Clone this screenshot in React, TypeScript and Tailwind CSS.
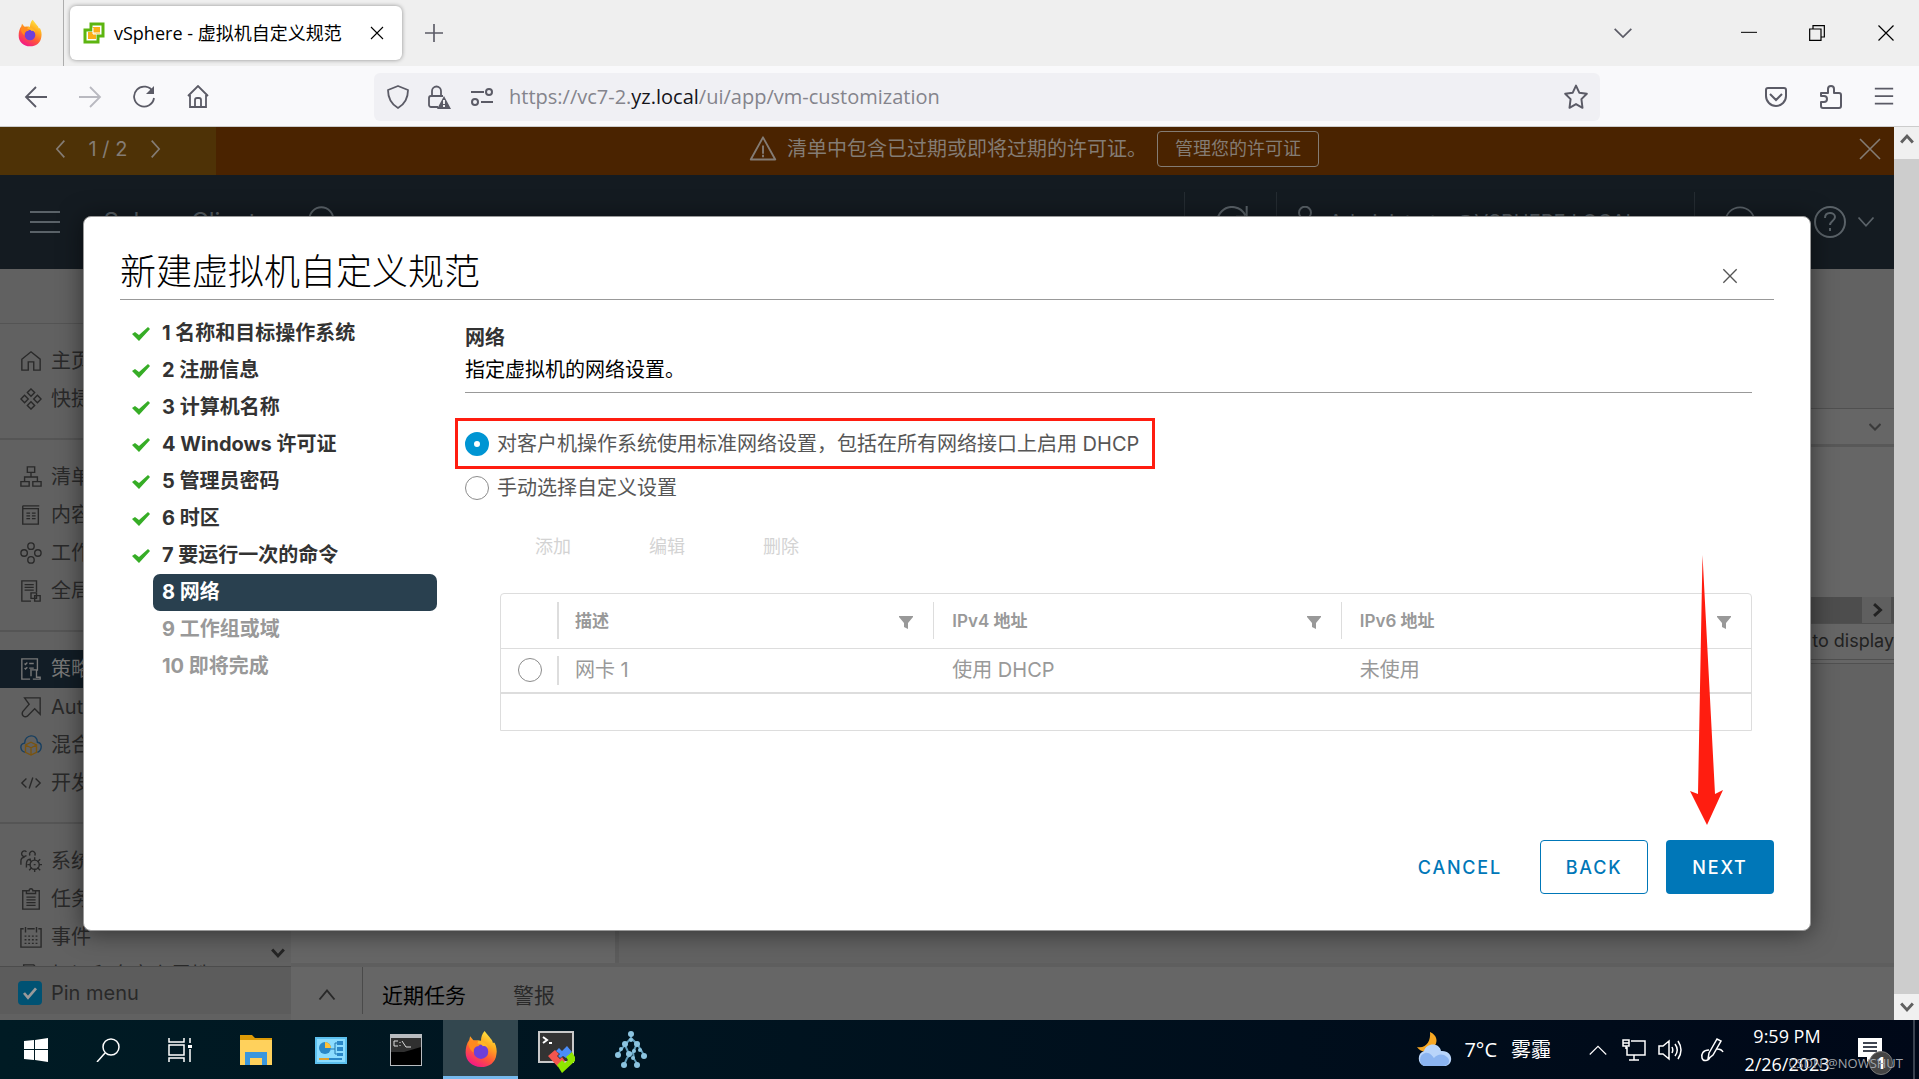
import { useState } from "react";
import type { ReactNode } from "react";
import clsx from "clsx";

const STEPS = [
  "1 名称和目标操作系统",
  "2 注册信息",
  "3 计算机名称",
  "4 Windows 许可证",
  "5 管理员密码",
  "6 时区",
  "7 要运行一次的命令",
  "8 网络",
  "9 工作组或域",
  "10 即将完成",
];
const CURRENT_STEP = 7;

function Icon({
  children,
  className,
  box = 24,
  stroke = 1.5,
}: {
  children: ReactNode;
  className?: string;
  box?: number;
  stroke?: number;
}) {
  return (
    <svg
      aria-hidden="true"
      viewBox={`0 0 ${box} ${box}`}
      fill="none"
      stroke="currentColor"
      strokeWidth={stroke}
      className={clsx("shrink-0", className)}
    >
      {children}
    </svg>
  );
}

function FirefoxLogo({ className }: { className: string }) {
  return (
    <svg aria-hidden="true" viewBox="0 0 36 42" className={className}>
      <defs>
        <linearGradient id="fx-body" x1="0.8" y1="0" x2="0.3" y2="1">
          <stop offset="0" stopColor="#fff04a" />
          <stop offset="0.35" stopColor="#ffab1f" />
          <stop offset="0.65" stopColor="#ff5a36" />
          <stop offset="1" stopColor="#f3148a" />
        </linearGradient>
      </defs>
      <path
        d="M22 1c2 3 5 6 7 9 1 1 2 3 2 4l2 0c2 4 3 9 2 13-1 9-8 14-17 14C8 41 1 34 1 25c0-5 1-10 4-14l1-4 4 5c3-1 6-1 8 0 0-4 1-8 4-11z"
        fill="url(#fx-body)"
      />
      <circle cx="18" cy="24" r="8" fill="#6d3fd9" />
      <path d="M4 14c4-4 10-3 14 1l-3 3c-4 0-6 3-5 7-3-2-6-6-6-11z" fill="#ff8a1e" />
      <path d="M15 12c5 0 10 3 11 8-2-2-4-3-6-2-1-2-3-3-6-3z" fill="#ffb728" />
    </svg>
  );
}

function TabStrip() {
  return (
    <div className="flex h-[66px] shrink-0 items-center bg-[#efefef] text-[#5b5b66]">
      <div className="flex h-full w-16 items-center justify-center border-r border-[#adadad]">
        <FirefoxLogo className="mr-1 h-7 w-6" />
      </div>
      <div className="ml-1.5 flex h-[54px] w-[332px] items-center rounded-md bg-white pl-[13px] pr-4 text-black shadow-[0_0_4px_rgba(0,0,0,0.4)]">
        <svg aria-hidden="true" viewBox="0 0 22 22" className="h-[22px] w-[22px] shrink-0">
          <path d="M8 2h12v12h-5v6H2V8h6z" fill="#fff" stroke="#5db510" strokeWidth="3" />
          <path d="M10 5h7v7h-4v5H5v-7h5z" fill="#fbae17" />
          <path d="M10 6v5h7M10 11v1h3" fill="none" stroke="#fff" strokeWidth="1" />
        </svg>
        <span className="ml-[9px] flex-1 whitespace-nowrap text-lg leading-6">vSphere - 虚拟机自定义规范</span>
        <button type="button" aria-label="Close tab">
          <Icon className="h-[18px] w-[18px]">
            <path d="M4 4l16 16M20 4L4 20" />
          </Icon>
        </button>
      </div>
      <button type="button" aria-label="New tab" className="ml-[23px]">
        <Icon className="h-[18px] w-[18px]" stroke={2.2}>
          <path d="M12 0v24M0 12h24" />
        </Icon>
      </button>
      <button type="button" aria-label="List all tabs" className="ml-auto">
        <Icon className="h-5 w-5" stroke={2}>
          <path d="M2 7l10 10L22 7" />
        </Icon>
      </button>
      <div className="ml-[108px] mr-6 flex items-center gap-[52px] text-black">
        <button type="button" aria-label="Minimize">
          <Icon className="h-4 w-4">
            <path d="M0 11h24" />
          </Icon>
        </button>
        <button type="button" aria-label="Restore">
          <Icon className="h-4 w-4" stroke={1.8}>
            <path d="M1 6h17v17H1zM6 6V1h17v17h-5" />
          </Icon>
        </button>
        <button type="button" aria-label="Close window">
          <Icon className="h-[18px] w-[18px]" stroke={1.6}>
            <path d="M2 2l20 20M22 2L2 22" />
          </Icon>
        </button>
      </div>
    </div>
  );
}

function NavBar() {
  return (
    <div className="flex h-[61px] shrink-0 items-center border-b border-[#cccccc] bg-[#f9f9fb] pt-px text-[#5b5b66]">
      <div className="ml-6 flex w-[350px] items-center gap-[30px]">
        <button type="button" aria-label="Back">
          <Icon className="h-6 w-6" stroke={1.8}>
            <path d="M23 12H2M12 2L2 12l10 10" />
          </Icon>
        </button>
        <button type="button" aria-label="Forward" className="text-[#b9b9c0]">
          <Icon className="h-6 w-6" stroke={1.8}>
            <path d="M1 12h21M12 2l10 10-10 10" />
          </Icon>
        </button>
        <button type="button" aria-label="Reload">
          <Icon className="h-6 w-6" stroke={1.8}>
            <path d="M21 7a10 10 0 1 0 1 6" />
            <path d="M22 1v8h-8z" fill="currentColor" stroke="none" />
          </Icon>
        </button>
        <button type="button" aria-label="Home">
          <Icon className="h-6 w-6" stroke={1.8}>
            <path d="M2 11L12 1l10 10M4 10v12h16V10M9 22v-7a2 2 0 0 1 2-2h2a2 2 0 0 1 2 2v7" />
          </Icon>
        </button>
      </div>
      <div className="flex h-12 flex-1 items-center rounded-md bg-[#f0f0f4] pl-3 pr-[11px]">
        <Icon className="h-6 w-6" stroke={1.8}>
          <path d="M12 1l10 4c0 8-3 14-10 18C5 19 2 13 2 5z" strokeLinejoin="round" />
        </Icon>
        <Icon className="ml-[17px] h-6 w-6" stroke={1.8}>
          <path d="M11 22H4a2 2 0 0 1-2-2v-7a2 2 0 0 1 2-2h12M5 11V6a4 4 0 0 1 9 0v5" />
          <path d="M17 11l7 13H10z" fill="currentColor" stroke="none" />
          <path d="M17 15v4M17 20v2" stroke="#fff" />
        </Icon>
        <Icon className="ml-[19px] h-6 w-6" stroke={2}>
          <path d="M1 7h13M11 17h12" />
          <circle cx="19" cy="7" r="3" />
          <circle cx="5" cy="17" r="3" />
        </Icon>
        <span className="ml-[15px] flex-1 whitespace-nowrap text-xl leading-7 text-[#84848c]">
          https://vc7-2.<span className="text-[#15141a]">yz.local</span>/ui/app/vm-customization
        </span>
        <button type="button" aria-label="Bookmark this page">
          <Icon className="h-[26px] w-[26px]" stroke={1.8}>
            <path
              d="M12 1.500l3 6.500 7 1-5 5 1 8-6-3.500L6 22l1-8-5-5 7-1z"
              strokeLinejoin="round"
            />
          </Icon>
        </button>
      </div>
      <div className="ml-[164px] mr-[25px] flex items-center gap-[31px]">
        <button type="button" aria-label="Save to Pocket">
          <Icon className="h-6 w-6" stroke={2}>
            <path d="M4 3h16a2 2 0 0 1 2 2v6a10 10 0 0 1-20 0V5a2 2 0 0 1 2-2zM6 9l6 6 6-6" />
          </Icon>
        </button>
        <button type="button" aria-label="Extensions">
          <Icon className="h-6 w-6" stroke={2}>
            <path
              d="M2 8h7V4a3 3 0 0 1 6 0v4h5a2 2 0 0 1 2 2v11a2 2 0 0 1-2 2H4a2 2 0 0 1-2-2v-4h3a3 3 0 0 0 0-6H2z"
              strokeLinejoin="round"
            />
          </Icon>
        </button>
        <button type="button" aria-label="Open menu">
          <Icon className="h-5 w-5" stroke={2.2}>
            <path d="M1 2h22M1 11h22M1 20h22" />
          </Icon>
        </button>
      </div>
    </div>
  );
}

function LicenseBanner() {
  return (
    <div className="flex h-12 shrink-0 items-center bg-[#4a2300] text-[#847c74]">
      <div className="flex h-full w-[216px] items-center justify-center gap-[18px] bg-[#4e3206] pb-1">
        <button type="button" aria-label="Previous alert">
          <Icon className="h-5 w-5" stroke={2}>
            <path d="M16 2L7 12l9 10" />
          </Icon>
        </button>
        <span className="text-xl leading-6">1 / 2</span>
        <button type="button" aria-label="Next alert">
          <Icon className="h-5 w-5" stroke={2}>
            <path d="M8 2l9 10-9 10" />
          </Icon>
        </button>
      </div>
      <div className="flex flex-1 items-center justify-center pb-1 pr-1.5">
        <Icon className="h-7 w-7" stroke={1.6}>
          <path d="M12 2l10.500 19h-21zM12 9v7M12 17v2" strokeLinejoin="round" />
        </Icon>
        <span className="ml-2.5 whitespace-nowrap text-xl leading-6">清单中包含已过期或即将过期的许可证。</span>
        <button
          type="button"
          className="ml-2.5 h-9 whitespace-nowrap rounded-[4px] border border-[#847c74] px-[17px] text-lg leading-6"
        >
          管理您的许可证
        </button>
      </div>
      <button type="button" aria-label="Dismiss" className="mb-1 mr-3">
        <Icon className="h-6 w-6" stroke={1.6}>
          <path d="M2 2l20 20M22 2L2 22" />
        </Icon>
      </button>
    </div>
  );
}

function AppHeader() {
  return (
    <header className="flex h-[94px] shrink-0 items-center bg-[#141b21] text-[#5a6268]">
      <button type="button" aria-label="Menu" className="ml-[30px]">
        <Icon className="h-[30px] w-[30px]" box={30} stroke={2}>
          <path d="M0 5h30M0 15h30M0 25h30" />
        </Icon>
      </button>
      <span className="ml-[30px] w-[218px] whitespace-nowrap text-2xl leading-6">vSphere Client</span>
      <Icon className="h-8 w-8">
        <circle cx="10" cy="10" r="9" />
        <path d="M17 17l6 6" />
      </Icon>
      <div className="ml-auto flex items-center">
        <div className="flex h-15 w-[92px] items-center border-l border-[#252c32] pl-[31px]">
          <Icon className="h-8 w-8">
            <path d="M22 7a11 11 0 1 0 1 6M23 0v8h-8" />
          </Icon>
        </div>
        <div className="flex h-15 w-[418px] items-center border-l border-[#252c32] pl-3">
          <Icon className="h-8 w-8">
            <circle cx="12" cy="5" r="4.500" />
            <path d="M3 22c0-12 18-12 18 0" />
          </Icon>
          <span className="ml-2 text-xl leading-6">Administrator@VSPHERE.LOCAL</span>
        </div>
        <div className="flex h-15 items-center border-l border-[#252c32] pl-[29px]">
          <Icon className="h-8 w-8" stroke={1.2}>
            <circle cx="12" cy="12" r="11" />
          </Icon>
        </div>
      </div>
      <button type="button" aria-label="Help" className="ml-[58px] mr-[19px] flex items-center gap-[11px]">
        <Icon className="h-8 w-8" box={32} stroke={2}>
          <circle cx="16" cy="16" r="15" />
          <path d="M11 12c0-7 10-6 10-1 0 4-5 4-5 8M16 22v3" />
        </Icon>
        <Icon className="h-[18px] w-[18px]" stroke={2.4}>
          <path d="M2 6l10 11L22 6" />
        </Icon>
      </button>
    </header>
  );
}

const sidebarGroups: { label: string; icon: ReactNode; active?: boolean }[][] = [
  [
    { label: "主页", icon: <path d="M2 10L12 2l10 8v12h-7v-9H9v9H2z" /> },
    {
      label: "快捷方式",
      icon: <path d="M12 1l4 4-4 4-4-4zM12 15l4 4-4 4-4-4zM5 8l4 4-4 4-4-4zM19 8l4 4-4 4-4-4z" />,
    },
  ],
  [
    {
      label: "清单",
      icon: <path d="M8 1h8v6H8zM1 17h9v5H1zM14 17h9v5h-9zM12 7v5M5 17v-5h14v5" />,
    },
    {
      label: "内容库",
      icon: <path d="M3 2h18M3 2v20h17V5H3M7 10h4M13 10h4M7 13h4M13 13h4M7 16h4M13 16h4" />,
    },
    {
      label: "工作负载管理",
      icon: (
        <>
          <circle cx="12" cy="4.500" r="3.500" />
          <circle cx="4.500" cy="12" r="3.500" />
          <circle cx="19.500" cy="12" r="3.500" />
          <circle cx="12" cy="19.500" r="3.500" />
        </>
      ),
    },
    {
      label: "全局清单列表",
      icon: <path d="M12 23H2V1h16v12M5 5h10M5 8h10M5 11h10M12 14h6v6h-6zM16 17h6v6h-6z" />,
    },
  ],
  [
    {
      label: "策略和配置文件",
      active: true,
      icon: <path d="M11 23H2V1h17v13M5 6l1 1 2-2M5 11l1 1 2-2M10 6h5M10 11h5M12 12v8M13 13h5v8h4v2h-8" />,
    },
    { label: "Auto Deploy", icon: <path d="M5 2h17v18l-6-6-8 8c-3 2-7-1-5-5l7-8z" /> },
    {
      label: "混合云服务",
      icon: (
        <>
          <path d="M6 20c-6-1-7-9-1-10 0-10 14-11 14-1 6 1 5 9 0 11" stroke="#173f60" />
          <path d="M12 9l6 3v8l-6 3-6-3v-8zM6 12l6 3 6-3M12 15v8" stroke="#7a5410" />
        </>
      ),
    },
    { label: "开发人员中心", icon: <path d="M7 7l-5 5 5 5M17 7l5 5-5 5M14 6l-4 12" /> },
  ],
  [
    {
      label: "系统管理",
      icon: (
        <>
          <path d="M1 16v-4c0-3 2-4 4-4M7 6a3 3 0 1 1 0-4M11 6a3 3 0 1 1 5 0M7 19v-4c0-3 2-5 5-5" />
          <circle cx="16" cy="16" r="5" />
          <path d="M16 8v3M16 21v3M8 16h3M21 16h3M10 10l3 3M19 19l3 3M10 22l3-3M19 13l3-3M15 16h2" />
        </>
      ),
    },
    {
      label: "任务",
      icon: <path d="M7 3H3v20h18V3h-4M7 6V3h3c0-3 4-3 4 0h3v3zM7 10h10M7 13h10M7 16h10M7 19h10" />,
    },
    {
      label: "事件",
      icon: (
        <>
          <path d="M4 3H1v20h22V3h-3M8 3h8M6 1v6M18 1v6" />
          <path d="M5 11h15M5 15h15M5 19h15" strokeDasharray="2 2" />
        </>
      ),
    },
    { label: "标记和自定义属性", icon: <path d="M4 1h11l4 5v16H4z" /> },
  ],
];

function Sidebar() {
  return (
    <nav className="flex w-[291px] shrink-0 flex-col bg-[#616161] text-[#292929]">
      <div className="relative min-h-0 flex-1 overflow-hidden">
        <div className="mb-[18px] h-[55px] border-b border-[#545454]" />
        {sidebarGroups.map((group, index) => (
          <div key={group[0].label}>
            {index > 0 && <div className="mb-[18px] mt-5 h-0.5 bg-[#555555]" />}
            {group.map((item) => (
              <a
                key={item.label}
                href="#"
                className={clsx(
                  "flex h-[38px] items-center whitespace-nowrap pl-5 text-xl leading-6",
                  item.active && "bg-[#121d26] text-[#777777]"
                )}
              >
                <Icon className="mr-[9px] h-[22px] w-[22px]">{item.icon}</Icon>
                {item.label}
              </a>
            ))}
          </div>
        ))}
        <Icon className="absolute bottom-1.5 right-1.5 h-3.5 w-3.5 text-[#252525]" stroke={5}>
          <path d="M2 6l10 11L22 6" />
        </Icon>
      </div>
      <label className="mb-1.5 flex h-12 items-center gap-[9px] border-t border-[#4c4c4c] bg-[#5c5c5c] pl-[18px] pt-1 text-xl leading-6">
        <span className="relative flex h-6 w-6">
          <input
            type="checkbox"
            defaultChecked
            className="h-6 w-6 appearance-none rounded-[4px] bg-[#005273]"
          />
          <Icon className="pointer-events-none absolute inset-1 h-4 w-4 text-[#9a9a9a]" stroke={4}>
            <path d="M3 12l6 7L21 5" />
          </Icon>
        </span>
        Pin menu
      </label>
    </nav>
  );
}

function Workspace() {
  return (
    <div className="flex min-w-0 flex-1 flex-col bg-[#666666]">
      <div className="flex min-h-0 flex-1">
        <div className="w-[328px] shrink-0 border-r-4 border-[#5c5c5c]" />
        <div className="flex min-w-0 flex-1 flex-col text-[#222222]">
          <div className="h-[139px] bg-[#626262]" />
          <div className="flex h-[39px] items-center justify-end border-b-[3px] border-t border-b-[#585858] border-t-[#505050] pr-[13px]">
            <Icon className="h-3 w-3 text-[#3a3a3a]" stroke={4}>
              <path d="M1 6l11 11L23 6" />
            </Icon>
          </div>
          <div className="h-[150px]" />
          <div className="flex h-[27px] items-center justify-end border-b border-[#505050] bg-[#4d4d4d] pr-[3px]">
            <div className="flex h-full w-[29px] items-center justify-center bg-[#5f5f5f]">
              <Icon className="h-3.5 w-3.5" stroke={5}>
                <path d="M7 2l11 10L7 22" />
              </Icon>
            </div>
          </div>
          <div className="h-9 border-b border-[#4f4f4f] text-right text-lg leading-[34px]">No items to display</div>
          <div className="mt-[3px] flex-1 border-t border-[#505050] bg-[#626262]" />
        </div>
      </div>
      <div className="flex h-[57px] shrink-0 border-t-4 border-[#5e5e5e] text-[21px] leading-7">
        <button type="button" aria-label="Expand tasks" className="mb-1.5 flex w-[72px] items-center justify-center border-r border-[#4a4a4a] pt-2">
          <Icon className="h-[18px] w-[18px] text-[#292929]" stroke={2.6}>
            <path d="M2 18L12 6l10 12" />
          </Icon>
        </button>
        <button type="button" className="ml-[19px] pt-1 text-black">近期任务</button>
        <button type="button" className="ml-[47px] pt-1 text-[#292929]">警报</button>
      </div>
    </div>
  );
}

function StepList() {
  return (
    <ol className="w-[317px] shrink-0 pt-[15px] text-xl font-bold leading-[37px]">
      {STEPS.map((label, index) => (
        <li key={label} className="flex items-center pl-[11px]">
          <span className="w-[22px] shrink-0">
            {index < CURRENT_STEP && (
              <svg aria-hidden="true" viewBox="0 0 20 16" className="h-4 w-5">
                <path d="M1 8l3-2 4 3 9-8 2 2L8 15z" fill="#36ad26" />
              </svg>
            )}
          </span>
          <span
            className={clsx(
              "w-[284px] whitespace-nowrap rounded-[7px] pl-[9px]",
              index === CURRENT_STEP && "bg-[#29404f] text-white",
              index < CURRENT_STEP && "text-[#333333]",
              index > CURRENT_STEP && "text-[#999999]"
            )}
          >
            {label}
          </span>
        </li>
      ))}
    </ol>
  );
}

function Radio({ checked, onSelect, id }: { checked: boolean; onSelect: () => void; id: string }) {
  return (
    <input
      id={id}
      type="radio"
      name="network-mode"
      checked={checked}
      onChange={onSelect}
      className="h-6 w-6 shrink-0 appearance-none rounded-full border border-[#8c8c8c] bg-white checked:border-[9px] checked:border-[#0095d3]"
    />
  );
}

function FilterButton() {
  return (
    <button type="button" aria-label="Filter" className="mt-1 text-[#999999]">
      <svg aria-hidden="true" viewBox="0 0 14 13" className="h-[13px] w-3.5">
        <path d="M0 0h14v1L9 7v6l-4-2V7L0 1z" fill="currentColor" />
      </svg>
    </button>
  );
}

function NicTable() {
  const columns = ["描述", "IPv4 地址", "IPv6 地址"];
  return (
    <div className="rounded-t-[4px] border border-[#dddddd]">
      <table className="w-full table-fixed border-collapse text-left text-[#999999]">
        <colgroup>
          <col className="w-[56px]" />
          <col className="w-[30.100%]" />
          <col className="w-[32.600%]" />
          <col />
        </colgroup>
        <thead>
          <tr className="h-[54px] border-b border-[#dddddd]">
            <td />
            {columns.map((name, index) => (
              <th key={name} scope="col" className="p-0 text-[17px] font-semibold leading-6">
                <div
                  className={clsx(
                    "flex h-[37px] items-center justify-between border-[#dddddd] pr-5",
                    index === 0 ? "border-l-2 pl-4" : "border-l pl-[18px]"
                  )}
                >
                  {name}
                  <FilterButton />
                </div>
              </th>
            ))}
          </tr>
        </thead>
        <tbody>
          <tr className="h-[45px] border-b-2 border-[#dddddd] text-xl leading-6">
            <td className="p-0 pl-[17px]">
              <input
                type="radio"
                name="nic"
                disabled
                aria-label="网卡 1"
                className="block h-6 w-6 appearance-none rounded-full border border-[#8c8c8c]"
              />
            </td>
            <td className="p-0">
              <div className="h-[29px] border-l-2 border-[#dddddd] pl-4 leading-[29px]">网卡 1</div>
            </td>
            <td className="p-0 pl-[19px]">使用 DHCP</td>
            <td className="p-0 pl-[19px]">未使用</td>
          </tr>
        </tbody>
        <tfoot>
          <tr className="h-[37px]">
            <td colSpan={4} />
          </tr>
        </tfoot>
      </table>
    </div>
  );
}

function WizardDialog() {
  const [mode, setMode] = useState<"standard" | "custom">("standard");

  return (
    <div
      role="dialog"
      aria-labelledby="wizard-title"
      className="absolute inset-x-[83px] inset-y-[89px] flex flex-col rounded-lg border border-[#999999] bg-white px-9 pb-9 text-black shadow-[0_2px_24px_rgba(0,0,0,0.5)]"
    >
      <div className="flex h-[83px] shrink-0 items-center justify-between border-b border-[#999999] pr-9 pt-7">
        <h1 id="wizard-title" className="text-4xl font-light leading-[54px]">新建虚拟机自定义规范</h1>
        <button type="button" aria-label="Close" className="mt-2 text-[#565656]">
          <Icon className="h-4 w-4" stroke={2}>
            <path d="M2 2l20 20M22 2L2 22" />
          </Icon>
        </button>
      </div>

      <div className="flex min-h-0 flex-1">
        <StepList />
        <section className="ml-7 mr-[22px] flex-1 pt-6">
          <h2 className="text-xl font-bold leading-7 text-[#333333]">网络</h2>
          <p className="mt-1 border-b border-[#999999] pb-2 text-xl leading-7">指定虚拟机的网络设置。</p>

          <div className="-ml-2.5 mt-[25px] flex flex-col items-start text-xl leading-6 text-[#565656]">
            <div className="flex h-[51px] w-[700px] items-center gap-2 border-[3px] border-[#ff1d10] pl-[7px]">
              <Radio id="net-standard" checked={mode === "standard"} onSelect={() => setMode("standard")} />
              <label htmlFor="net-standard" className="whitespace-nowrap">
                对客户机操作系统使用标准网络设置，包括在所有网络接口上启用 DHCP
              </label>
            </div>
            <div className="mt-[7px] flex items-center gap-2 pl-2.5">
              <Radio id="net-custom" checked={mode === "custom"} onSelect={() => setMode("custom")} />
              <label htmlFor="net-custom" className="whitespace-nowrap">手动选择自定义设置</label>
            </div>
          </div>

          <div className="pl-[35px]">
            <div className="mb-[34px] mt-[35px] flex text-lg leading-6 text-[#d3d3d3]">
              <button type="button" disabled className="w-[114px] pr-2">添加</button>
              <button type="button" disabled className="w-[114px] pr-2">编辑</button>
              <button type="button" disabled className="w-[114px] pr-2">删除</button>
            </div>
            <NicTable />
          </div>
        </section>
      </div>

      <div className="flex shrink-0 justify-end gap-[18px] text-lg font-medium leading-6 tracking-widest">
        <button type="button" className="h-[54px] px-5 pt-0.5 text-[#0077b8]">CANCEL</button>
        <button type="button" className="h-[54px] w-[108px] rounded-[4px] border border-[#0077b8] pt-0.5 text-[#0077b8]">
          BACK
        </button>
        <button type="button" className="h-[54px] w-[108px] rounded-[4px] bg-[#0077b8] pt-0.5 text-white">NEXT</button>
      </div>

      {/* pointer to the NEXT button */}
      <svg
        aria-hidden="true"
        viewBox="0 0 34 270"
        className="pointer-events-none absolute bottom-[105px] right-[86px] h-[270px] w-[34px]"
      >
        <path d="M12.500 0L25 239l8-4-16 35L0 236l8 3z" fill="#ff1d10" />
      </svg>
    </div>
  );
}

function PageScrollbar() {
  return (
    <div className="flex w-[25px] shrink-0 flex-col bg-[#cdcdcd] text-[#606060]">
      <div className="flex h-8 items-center justify-center bg-[#f0f0f0] pb-2">
        <Icon className="h-3.5 w-3.5" stroke={5}>
          <path d="M2 18L12 7l10 11" />
        </Icon>
      </div>
      <div className="flex-1" />
      <div className="flex h-[26px] items-center justify-center bg-[#f0f0f0]">
        <Icon className="h-3.5 w-3.5" stroke={5}>
          <path d="M2 6l10 11L22 6" />
        </Icon>
      </div>
    </div>
  );
}

const pinnedApps: { name: string; icon: ReactNode; active?: boolean }[] = [
  {
    name: "File Explorer",
    icon: (
      <>
        <path d="M0 1h12l3 3h17v27H0z" fill="#dd9b07" />
        <path d="M0 6h32v25H0z" fill="#ffd15c" />
        <path d="M5 31V18h22v13h-5v-7H10v7z" fill="#3a96dd" />
      </>
    ),
  },
  {
    name: "Control Panel",
    icon: (
      <>
        <path d="M0 3h32v27H0z" fill="#5cc0ee" />
        <path d="M2 5h28v23H2z" fill="#8bdcff" />
        <circle cx="10" cy="14" r="6" fill="#2a87c8" />
        <path d="M10 14V8a6 6 0 0 1 6 6z" fill="#ffc13a" />
        <path d="M16 15h4V9h2M20 15v5h2" stroke="#2176ae" fill="none" />
        <path d="M22 7h6v4h-6zM22 13h6v4h-6zM22 19h6v3h-6z" fill="#2a87c8" />
        <path d="M4 25h10" stroke="#e0a030" strokeWidth="2" />
        <path d="M14 25h13" stroke="#2a87c8" strokeWidth="2" />
      </>
    ),
  },
  {
    name: "Command Prompt",
    icon: (
      <>
        <path d="M0 0h32v32H0z" fill="#b9bcc0" />
        <path d="M1 4h30v27H1z" fill="#000" />
        <path d="M1 4h30v9L14 18H1z" fill="#303030" />
        <path d="M8 7H4v5h4M10 8v1M10 11v1M12 7l4 6M16 13h5" stroke="#ddd" fill="none" />
      </>
    ),
  },
  { name: "Firefox", active: true, icon: null },
  {
    name: "MobaXterm",
    icon: (
      <>
        <path d="M-2-3h36v32H-2z" fill="#c9c9c9" />
        <path d="M0-1h32v28H0z" fill="#333" />
        <path d="M3 3l4 3-4 3M9 9h3" stroke="#fff" strokeWidth="2" fill="none" />
        <path d="M8 22l7-6 4 4-2 2 3 3 2-2 3 4-7 6z" fill="#f4554e" />
        <path d="M16 17l3-3 3 3 5-5 5 6-6 6-3-2-3 2-2-2 2-2z" fill="#4a8df8" />
        <path d="M17 31l5-5 3 3 3-3-2-3 6-5 3 5v4L22 39z" fill="#8fe600" />
      </>
    ),
  },
  {
    name: "Topology",
    icon: (
      <>
        <path
          d="M16 0v4L10 11 6 16 2 21M10 11l4 9M16 4l6 6 4 6 4 7M22 10l-4 8-6 6-3 7M18 18l1 7 4 6"
          stroke="#5f9cba"
          strokeWidth="2"
          fill="none"
        />
        <g fill="#8cc4e0">
          <circle cx="16" cy="0" r="3" />
          <circle cx="16" cy="6" r="2" />
          <circle cx="10" cy="10" r="3" />
          <circle cx="22" cy="10" r="3" />
          <circle cx="6" cy="15" r="2" />
          <circle cx="3" cy="21" r="3" />
          <circle cx="14" cy="20" r="3" />
          <circle cx="19" cy="17" r="2" />
          <circle cx="25" cy="16" r="2" />
          <circle cx="29" cy="22" r="3" />
          <circle cx="18" cy="24" r="2" />
          <circle cx="9" cy="31" r="3" />
          <circle cx="22" cy="31" r="3" />
        </g>
      </>
    ),
  },
];

function Taskbar() {
  return (
    <div className="relative flex h-[59px] shrink-0 items-center bg-linear-to-r from-[#001b24] to-[#000818] text-white">
      <button type="button" aria-label="Start" className="flex w-[72px] justify-center">
        <svg aria-hidden="true" viewBox="0 0 24 24" className="h-6 w-6">
          <path d="M0 3l10-1v9H0zM11 2l13-2v11H11zM0 12h10v10L0 21zM11 12h13v12l-13-2z" fill="#fff" />
        </svg>
      </button>
      <button type="button" aria-label="Search" className="flex w-[72px] justify-center">
        <Icon className="h-6 w-6">
          <circle cx="15" cy="9" r="8" />
          <path d="M9 15l-8 9" />
        </Icon>
      </button>
      <button type="button" aria-label="Task view" className="flex w-[72px] justify-center">
        <Icon className="h-6 w-6">
          <path d="M1 0v4h15V0M1 7h15v10H1zM1 24v-4h15v4M22 0v5M22 11v13" />
          <path d="M20 7h4v3h-4z" fill="currentColor" stroke="none" />
        </Icon>
      </button>
      <div className="ml-0.5 flex h-full">
        {pinnedApps.map((app) => (
          <button
            key={app.name}
            type="button"
            aria-label={app.name}
            className={clsx(
              "flex h-full w-[75px] items-center justify-center",
              app.active && "border-b-[3px] border-[#76b9ed] bg-[#33474f]"
            )}
          >
            {app.icon ? (
              <svg aria-hidden="true" viewBox="0 0 32 32" className="h-8 w-8 overflow-visible">
                {app.icon}
              </svg>
            ) : (
              <FirefoxLogo className="mt-0.5 h-[38px] w-[34px]" />
            )}
          </button>
        ))}
      </div>

      <div className="ml-auto flex h-full items-center">
        <svg aria-hidden="true" viewBox="0 0 36 36" className="h-9 w-9">
          <path d="M14 0c7 3 9 10 3 16-5 5-12 5-16-1 9 2 14-6 13-15z" fill="#f8a823" />
          <path d="M8 34a8 8 0 0 1 0-15c2-8 15-9 17 0 13-1 13 15 3 15z" fill="#b9d5fa" />
          <path d="M8 34a7 7 0 0 1 1-13c5-1 7 3 9 5 3-4 9-5 13-1 4 3 2 9-4 9z" fill="#8bb4f0" />
        </svg>
        <span className="ml-3 text-xl leading-6">7°C</span>
        <span className="ml-3.5 whitespace-nowrap text-xl leading-6">雾霾</span>
        <Icon className="ml-[38px] h-[18px] w-[18px]">
          <path d="M1 18L12 7l11 11" />
        </Icon>
        <Icon className="ml-[15px] h-6 w-6">
          <path d="M9 3h14v14H5V9M12 17v5M7 22h10M1 2h6v6H1zM4 8v3M1 5h6" />
        </Icon>
        <Icon className="ml-3 h-6 w-6">
          <path d="M1 8h4l6-5v18l-6-5H1zM14 9c1 2 1 4 0 6M17 6c3 4 3 8 0 12M20 3c4 6 4 12 0 18" />
        </Icon>
        <Icon className="ml-[18px] h-6 w-6">
          <path d="M9 15L17 1l4 2-8 14-5 4zM9 12c-6 0-8 4-7 8s7 3 8-1M17 11c3 0 5 1 6 3" />
        </Icon>
        <div className="ml-[21px] w-[84px] whitespace-nowrap text-center text-lg leading-7">
          <div>9:59 PM</div>
          <div className="flex justify-center">2/26/2023</div>
        </div>
        <Icon className="ml-[29px] mr-[31px] h-6 w-6">
          <path d="M0 0h24v19h-9l-6 5v-5H0z" fill="currentColor" stroke="none" />
          <path d="M5 5h14M5 9h14M5 13h14" stroke="#000818" />
        </Icon>
        <div className="mr-1 h-full w-0.5 bg-[#3a4250]" />
      </div>
      <span className="absolute bottom-1 right-[26px] flex h-6 w-6 items-center justify-center rounded-full border border-[#777777] bg-[#444444] text-base font-bold leading-6">
        1
      </span>
      <span className="absolute bottom-1.5 right-4 text-[13px] leading-5 text-[#a0a4aa]">CSDN @NOWSHUT</span>
    </div>
  );
}

export default function App() {
  return (
    <div className="flex h-screen flex-col overflow-hidden font-['Open_Sans','Noto_Sans_CJK_SC',sans-serif]">
      <TabStrip />
      <NavBar />
      <div className="flex min-h-0 flex-1 font-['Inter','Noto_Sans_CJK_SC',sans-serif]">
        <main className="relative flex min-w-0 flex-1 flex-col overflow-hidden">
          <LicenseBanner />
          <AppHeader />
          <div className="flex min-h-0 flex-1">
            <Sidebar />
            <Workspace />
          </div>
          <WizardDialog />
        </main>
        <PageScrollbar />
      </div>
      <Taskbar />
    </div>
  );
}
